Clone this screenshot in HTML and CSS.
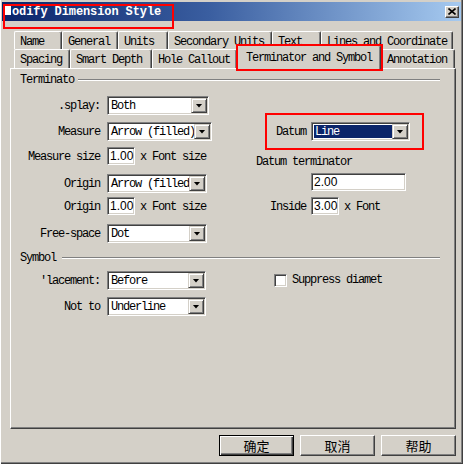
FILE: index.html
```html
<!DOCTYPE html>
<html lang="en">

<head>
    <meta charset="UTF-8">
    <title>Modify Dimension Style</title>
    <link rel="stylesheet" href="styles.css">
</head>

<body>
    <div class="window">
        <div class="titlebar">
            <span class="title"><span class="caret">M</span>odify Dimension Style</span>
            <span class="close">
                <svg width="8" height="7" viewBox="0 0 8 7"><path d="M0.5 0.5 L7.5 6.5 M7.5 0.5 L0.5 6.5" stroke="#000" stroke-width="1.6"/></svg>
            </span>
        </div>

        <div class="tabs">
            <div class="tab-row row-back">
                <span class="tab" style="width:48px">Name</span>
                <span class="tab" style="width:56px">General</span>
                <span class="tab" style="width:50px">Units</span>
                <span class="tab" style="width:104px">Secondary Units</span>
                <span class="tab" style="width:49px">Text</span>
                <span class="tab" style="width:132px">Lines and Coordinate</span>
            </div>
            <div class="tab-row row-front">
                <span class="tab" style="width:56px">Spacing</span>
                <span class="tab" style="width:82px">Smart Depth</span>
                <span class="tab" style="width:85px">Hole Callout</span>
                <span class="tab active" style="width:144px">Terminator and Symbol</span>
                <span class="tab" style="width:74px">Annotation</span>
            </div>
        </div>

        <div class="page">
            <div class="group-head"><span>Terminato</span><i class="rule"></i></div>
            <div class="cols">
                <div class="col-left">
                    <div class="row">
                        <label>.splay:</label>
                        <div class="select" style="width:102px"><span>Both</span><b class="drop"></b></div>
                    </div>
                    <div class="row mt7">
                        <label>Measure</label>
                        <div class="select" style="width:105px"><span>Arrow (filled)</span><b class="drop"></b></div>
                    </div>
                    <div class="row short mt6">
                        <label>Measure size</label>
                        <div class="num">1.00</div>
                        <span class="unit">x Font size</span>
                    </div>
                    <div class="row mt9">
                        <label>Origin</label>
                        <div class="select" style="width:100px"><span>Arrow (filled)</span><b class="drop"></b></div>
                    </div>
                    <div class="row short mt4">
                        <label>Origin</label>
                        <div class="num">1.00</div>
                        <span class="unit">x Font size</span>
                    </div>
                    <div class="row mt9">
                        <label>Free-space</label>
                        <div class="select" style="width:100px"><span>Dot</span><b class="drop"></b></div>
                    </div>
                </div>
                <div class="col-right">
                    <div class="row">
                        <label class="rlabel">Datum</label>
                        <div class="select focus" style="width:99px"><span>Line</span><b class="drop"></b></div>
                    </div>
                    <div class="caption">Datum terminator</div>
                    <div class="num wide">2.00</div>
                    <div class="row short mt6">
                        <label class="rlabel">Inside</label>
                        <div class="num">3.00</div>
                        <span class="unit">x Font</span>
                    </div>
                </div>
            </div>

            <div class="group-head symbol"><span>Symbol</span><i class="rule"></i></div>
            <div class="cols sym">
                <div class="col-left">
                    <div class="row">
                        <label>'lacement:</label>
                        <div class="select" style="width:99px"><span>Before</span><b class="drop"></b></div>
                    </div>
                    <div class="row mt7">
                        <label>Not to</label>
                        <div class="select" style="width:99px"><span>Underline</span><b class="drop"></b></div>
                    </div>
                </div>
                <div class="col-right">
                    <div class="check-row"><i class="check"></i><span>Suppress diamet</span></div>
                </div>
            </div>
        </div>

        <div class="buttons">
            <button class="btn default">确定</button>
            <button class="btn">取消</button>
            <button class="btn">帮助</button>
        </div>

        <!-- red markers over the screenshot -->
        <div class="mark" style="left:3px;top:4px;width:171px;height:25px"></div>
        <div class="mark" style="left:236px;top:44px;width:147px;height:27px"></div>
        <div class="mark" style="left:265px;top:113px;width:159px;height:37px"></div>
    </div>
</body>

</html>
```

FILE: styles.css
```css
* {
    margin: 0;
    padding: 0;
    box-sizing: border-box;
}

body {
    background: #fff;
    font-family: "Liberation Mono", "DejaVu Sans Mono", monospace;
    font-size: 12px;
    letter-spacing: -1.2px;
    color: #000;
}

.window {
    position: relative;
    width: 463px;
    height: 464px;
    padding: 2px 2px 0 2px;
    background: #d4d0c8;
    box-shadow: inset 1px 0 #fff, inset -1px -1px #404040, inset -2px -2px #808080;
}

/* title bar */
.titlebar {
    height: 19px;
    display: flex;
    align-items: center;
    justify-content: space-between;
    padding: 0 2px 0 3px;
    background: linear-gradient(to right, #0a246a, #3a5ea0 45%, #a6caf0);
}

.title {
    color: #fff;
    font-weight: bold;
    letter-spacing: -0.1px;
    white-space: nowrap;
}

.caret {
    display: inline-block;
    width: 6px;
    height: 9px;
    line-height: 9px;
    overflow: hidden;
    background: #fff;
    color: #fff;
    margin-right: 1px;
}

.close {
    width: 14px;
    height: 12px;
    display: flex;
    align-items: center;
    justify-content: center;
    background: #d4d0c8;
    border: 1px solid;
    border-color: #fff #404040 #404040 #fff;
    box-shadow: inset -1px -1px #808080;
}

/* tabs */
.tabs {
    margin-top: 10px;
}

.tab-row {
    display: flex;
    padding-left: 12px;
}

.row-back {
    height: 18px;
}

.row-front {
    position: relative;
    z-index: 1;
    margin-bottom: -2px;
}

.tab {
    flex: none;
    height: 18px;
    line-height: 16px;
    padding: 2px 0 0 5px;
    white-space: nowrap;
    overflow: hidden;
    border-top: 1px solid #fff;
    border-left: 1px solid #fff;
    border-right: 1px solid #404040;
    border-radius: 2px 2px 0 0;
    box-shadow: inset -1px 0 #808080;
}

.row-front .tab {
    height: 19px;
    margin-bottom: 2px;
    line-height: 17px;
}

.row-front .tab.active {
    height: 25px;
    margin-top: -4px;
    margin-bottom: 0;
    padding: 4px 0 0 8px;
    background: #d4d0c8;
}

/* tab page */
.page {
    margin-left: 8px;
    width: 446px;
    height: 361px;
    padding: 5px 0 0 9px;
    border: 1px solid;
    border-color: #fff #404040 #404040 #fff;
    box-shadow: inset -1px -1px #808080;
}

.group-head {
    display: flex;
    align-items: center;
    width: 420px;
    height: 12px;
    line-height: 12px;
}

.group-head.symbol {
    margin-top: 9px;
}

.rule {
    flex: 1;
    height: 2px;
    margin-left: 4px;
    border-top: 1px solid #808080;
    border-bottom: 1px solid #fff;
}

.symbol .rule {
    margin-left: 6px;
}

.cols {
    display: flex;
    margin-top: 10px;
}

.cols.sym {
    margin-top: 7px;
}

.col-left {
    width: 236px;
}

.col-right {
    margin-top: 26px;
}

.sym .col-right {
    margin-top: 2px;
}

.row {
    display: flex;
    align-items: center;
    height: 19px;
}

.row.short {
    height: 18px;
}

.mt4 { margin-top: 4px; }
.mt6 { margin-top: 6px; }
.mt7 { margin-top: 7px; }
.mt9 { margin-top: 9px; }

.row label {
    width: 80px;
    margin-right: 7px;
    padding-top: 1px;
    text-align: right;
    white-space: nowrap;
}

.row label.rlabel {
    width: 50px;
    margin-right: 5px;
}

.select {
    display: flex;
    height: 19px;
    background: #fff;
    border: 1px solid;
    border-color: #808080 #fff #fff #808080;
    box-shadow: inset 1px 1px #404040, inset -1px -1px #d4d0c8;
    padding: 1px;
}

.select span {
    flex: 1;
    overflow: hidden;
    white-space: nowrap;
    padding-left: 2px;
    line-height: 16px;
}

.select.focus span {
    margin: 1px 0 1px 1px;
    padding-left: 1px;
    line-height: 14px;
    background: #0a246a;
    color: #fff;
}

.drop {
    flex: none;
    width: 16px;
    height: 15px;
    display: flex;
    align-items: center;
    justify-content: center;
    background: #d4d0c8;
    border: 1px solid;
    border-color: #d4d0c8 #404040 #404040 #d4d0c8;
    box-shadow: inset 1px 1px #fff, inset -1px -1px #808080;
}

.drop::after {
    content: "";
    width: 7px;
    height: 4px;
    background: #000;
    clip-path: polygon(0 0, 100% 0, 50% 100%);
}

.num {
    width: 28px;
    height: 18px;
    padding-left: 2px;
    line-height: 16px;
    background: #fff;
    font-family: "Liberation Sans", Arial, sans-serif;
    font-size: 12px;
    letter-spacing: 0;
    border: 1px solid;
    border-color: #808080 #fff #fff #808080;
    box-shadow: inset 1px 1px #404040, inset -1px -1px #d4d0c8;
}

.num.wide {
    width: 95px;
    margin: 5px 0 0 55px;
}

.unit {
    margin-left: 5px;
    padding-top: 1px;
    white-space: nowrap;
}

.caption {
    height: 12px;
    line-height: 12px;
    margin-top: 15px;
    white-space: nowrap;
}

.check-row {
    display: flex;
    align-items: center;
    margin-left: 18px;
}

.check {
    width: 13px;
    height: 13px;
    margin-right: 5px;
    background: #fff;
    border: 1px solid;
    border-color: #808080 #fff #fff #808080;
    box-shadow: inset 1px 1px #404040, inset -1px -1px #d4d0c8;
}

/* dialog buttons */
.buttons {
    display: flex;
    justify-content: flex-end;
    gap: 6px;
    margin-top: 6px;
    padding-right: 5px;
}

.btn {
    width: 75px;
    height: 21px;
    background: #d4d0c8;
    font-family: "Noto Sans CJK SC", sans-serif;
    font-size: 13px;
    letter-spacing: 0;
    color: #000;
    border: 1px solid;
    border-color: #fff #404040 #404040 #fff;
    box-shadow: inset -1px -1px #808080;
}

.btn.default {
    border-color: #000;
    box-shadow: inset 1px 1px #fff, inset -1px -1px #404040, inset -2px -2px #808080;
}

.mark {
    position: absolute;
    z-index: 5;
    border: 2px solid #f00;
}
```
